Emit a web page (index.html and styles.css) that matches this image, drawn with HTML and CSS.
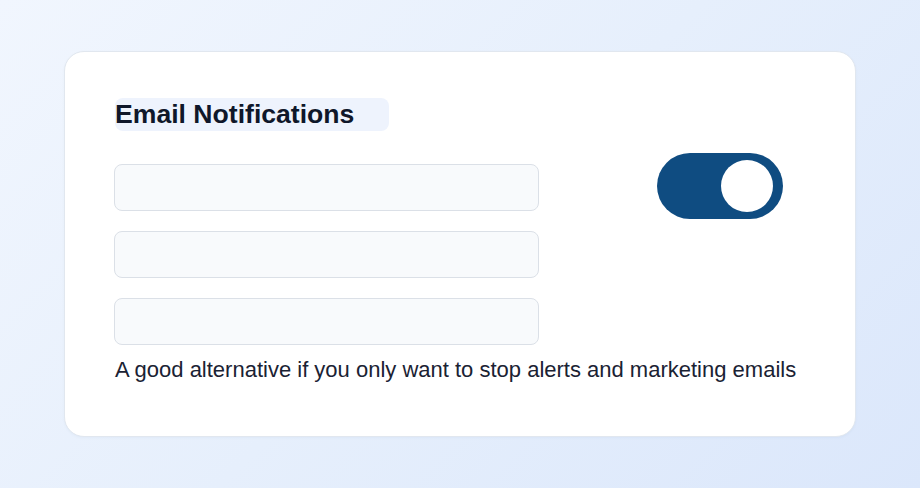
FILE: index.html
```html
<!DOCTYPE html>
<html lang="en">
<head>
<meta charset="utf-8">
<title>Email Notifications</title>
<link rel="stylesheet" href="styles.css">
</head>
<body>
  <main class="card">
    <h2 class="title">Email Notifications</h2>
    <div class="settings">
      <input class="field" type="text" aria-label="Field 1">
      <div class="toggle" role="switch" aria-checked="true"><span class="knob"></span></div>
      <input class="field" type="text" aria-label="Field 2">
      <input class="field" type="text" aria-label="Field 3">
    </div>
    <p class="caption">A good alternative if you only want to stop alerts and marketing emails</p>
  </main>
</body>
</html>
```
FILE: styles.css
```css
* { box-sizing: border-box; }
html, body { margin: 0; height: 100%; }
body {
  font-family: "Liberation Sans", Arial, sans-serif;
  background: linear-gradient(135deg, #f1f6fe 0%, #e6effc 50%, #dbe7fb 100%);
  display: flex;
  align-items: center;
  justify-content: center;
  min-height: 100vh;
}
.card {
  width: 792px;
  background: #ffffff;
  border: 1px solid #e1e7ef;
  border-radius: 20px;
  padding: 46px 49px 51px 49px;
  box-shadow: 0 1px 3px rgba(30, 64, 120, 0.04);
}
.title {
  display: inline-block;
  margin: 0 0 0 1px;
  font-size: 26.6px;
  font-weight: 700;
  line-height: 30px;
  padding: 1px 35px 2px 0;
  color: #0f172a;
  background: #eef3fd;
  border-radius: 8px;
}
.settings {
  display: grid;
  grid-template-columns: 425px 1fr;
  row-gap: 20px;
  margin-top: 33px;
}
.field {
  grid-column: 1;
  display: block;
  width: 425px;
  height: 47px;
  margin: 0;
  background: #f8fafc;
  border: 1px solid #dbe0e7;
  border-radius: 8px;
  font: inherit;
}
.toggle {
  grid-column: 2;
  grid-row: 1;
  justify-self: end;
  align-self: center;
  width: 126px;
  height: 66px;
  margin: -11px 23px -9px 0;
  background: #0f4c81;
  border-radius: 33px;
  padding: 7px 10px;
  display: flex;
  justify-content: flex-end;
  align-items: center;
}
.knob {
  width: 52px;
  height: 52px;
  border-radius: 50%;
  background: #ffffff;
}
.caption {
  margin: 10px 0 0 1px;
  font-size: 22px;
  line-height: 30.8px;
  color: #1a2233;
}
```
